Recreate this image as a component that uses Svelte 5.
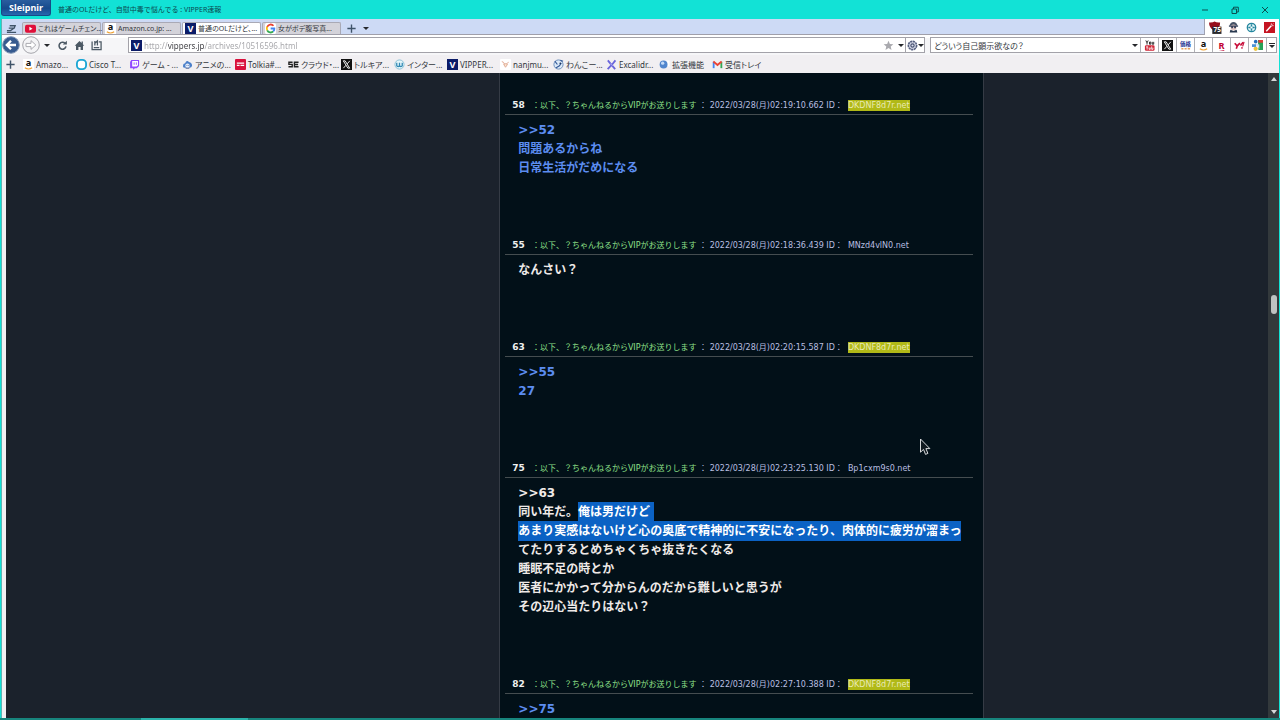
<script lang="ts">
	interface Post {
		num: number;
		date: string;
		id: string;
		owner: boolean;
		lines: string[];
	}

	const title = '普通のOLだけど、自慰中毒で悩んでる : VIPPER速報';

	const tabs = [
		{ icon: 'youtube', label: 'これはゲームチェン...' },
		{ icon: 'amazon', label: 'Amazon.co.jp: ...' },
		{ icon: 'vip', label: '普通のOLだけど、...' },
		{ icon: 'google', label: '女がボデ腹写真...' }
	];

	const bookmarks = [
		{ icon: 'amazon', label: 'Amazo...' },
		{ icon: 'cisco', label: 'Cisco T...' },
		{ icon: 'twitch', label: 'ゲーム - ...' },
		{ icon: 'anime', label: 'アニメの...' },
		{ icon: 'tolkia', label: 'Tolkia#...' },
		{ icon: 'sie', label: 'クラウド・...' },
		{ icon: 'x', label: 'トルキア...' },
		{ icon: 'internet', label: 'インター...' },
		{ icon: 'vip', label: 'VIPPER...' },
		{ icon: 'nanjmu', label: 'nanjmu...' },
		{ icon: 'wanko', label: 'わんこー...' },
		{ icon: 'excalidraw', label: 'Excalidr...' },
		{ icon: 'extension', label: '拡張機能' },
		{ icon: 'gmail', label: '受信トレイ' }
	];

	const engines = ['youtubeOld', 'x', 'kakaku', 'amazon', 'rakuten', 'yahoo', 'maps'];
	const extensions = ['ublock', 'agent', 'compass', 'wand'];

	const author = '以下、？ちゃんねるからVIPがお送りします';

	const posts: Post[] = [
		{ num: 58, date: '2022/03/28(月)02:19:10.662', id: 'DKDNF8d7r.net', owner: true, lines: ['>>52', '問題あるからね', '日常生活がだめになる'] },
		{ num: 55, date: '2022/03/28(月)02:18:36.439', id: 'MNzd4vlN0.net', owner: false, lines: ['なんさい？'] },
		{ num: 63, date: '2022/03/28(月)02:20:15.587', id: 'DKDNF8d7r.net', owner: true, lines: ['>>55', '27'] },
		{
			num: 75,
			date: '2022/03/28(月)02:23:25.130',
			id: 'Bp1cxm9s0.net',
			owner: false,
			lines: [
				'>>63',
				'同い年だ。[俺は男だけど]',
				'[あまり実感はないけど心の奥底で精神的に不安になったり、肉体的に疲労が溜まっ]てたりするとめちゃくちゃ抜きたくなる',
				'睡眠不足の時とか',
				'医者にかかって分からんのだから難しいと思うが',
				'その辺心当たりはない？'
			]
		},
		{ num: 82, date: '2022/03/28(月)02:27:10.388', id: 'DKDNF8d7r.net', owner: true, lines: ['>>75'] }
	];

	let activeTab = $state(2);
	let url = $state('http://vippers.jp/archives/10516596.html');
	let query = $state('どういう自己顕示欲なの？');

	// text between brackets is the selected part of a line
	function split(line: string) {
		return line
			.split(/(\[.*?\])/)
			.filter((s) => s)
			.map((s, i, all) => ({
				selected: s.startsWith('['),
				eol: i === all.length - 1,
				text: s.replace(/[[\]]/g, '')
			}));
	}
</script>

{#snippet icon(name: string)}
	<svg class="icon" viewBox="0 0 12 12" aria-hidden="true">
		{#if name === 'youtube'}
			<rect x="0" y="2" width="12" height="8.5" rx="2" fill="#e0103a" />
			<path d="M4.8 4.2v4l3.4-2z" fill="#fff" />
		{:else if name === 'amazon'}
			<rect width="12" height="12" fill="#fff" />
			<text x="3" y="8" font-size="10" font-weight="700" fill="#111">a</text>
			<path d="M2 9.6q4 2.7 8 0" fill="none" stroke="#f0a030" stroke-width="1.2" />
		{:else if name === 'vip'}
			<rect width="12" height="12" fill="#0c1c68" />
			<text x="2.7" y="9.5" font-size="10" font-weight="700" fill="#fff">V</text>
		{:else if name === 'google'}
			<rect width="12" height="12" rx="2" fill="#fff" />
			<g fill="none" stroke-width="2">
				<path d="M9.3 3A4.2 4.2 0 0 0 2.4 4.1" stroke="#ea4335" />
				<path d="M2.4 4.1a4.2 4.2 0 0 0 0 3.9" stroke="#fbbc05" />
				<path d="M2.4 8a4.2 4.2 0 0 0 6.6 1.2" stroke="#34a853" />
				<path d="M9 9.2A4 4 0 0 0 10.2 6H6.2" stroke="#4285f4" />
			</g>
		{:else if name === 'cisco'}
			<rect x="1" y="1" width="10" height="10" rx="4" fill="#fff" stroke="#1ba6d4" stroke-width="2" />
		{:else if name === 'twitch'}
			<path d="M2.5 1H11v6.5L8.5 10H6.5L4.5 11.8V10H1.2V3.2z" fill="#9147ff" />
			<path d="M3.5 2.2h6.3v4.6L8.2 8.3H3.5z" fill="#fff" />
			<path d="M5.6 3.7v2.6M8 3.7v2.6" stroke="#9147ff" />
		{:else if name === 'anime'}
			<path d="M1 7.8Q1 5 3.4 4.7 5 .4 7.6 3.2 10.9 3.8 11 7.4 10.4 9.8 8 9.6H3.2Q1.1 9.4 1 7.8" fill="#4b7fc9" />
			<circle cx="6" cy="7.4" r="2.4" fill="#e6f0ff" />
			<path d="M4 10h4M5 7h.8M7 7h.8" stroke="#344a80" />
		{:else if name === 'tolkia'}
			<rect width="12" height="12" rx="1" fill="#d9113c" />
			<path d="M2 4.5h8M2 7h3M6 7h4" stroke="#fff" stroke-width="1.5" />
		{:else if name === 'sie'}
			<path d="M5 3.5H1v2.3h3.6v2.7H.5M11.5 3.5H7v5h4.5M7 6h4" fill="none" stroke="#222" stroke-width="1.5" />
		{:else if name === 'x'}
			<rect width="12" height="12" fill="#111" />
			<path d="M2.5 2h2l5 8h-2zM9.6 2 6.8 5.3M5.3 6.9 2.6 10" fill="none" stroke="#fff" />
		{:else if name === 'internet'}
			<circle cx="6" cy="6" r="5" fill="#e5f6fa" stroke="#85bed4" />
			<path d="M3 4v3.5q1.5 1.4 3 0V4M6 7.5q1.5 1.4 3 0V4" fill="none" stroke="#348ab5" stroke-width="1.4" />
		{:else if name === 'nanjmu'}
			<rect width="12" height="12" rx="1" fill="#fff" />
			<path d="M2 2.8q2 0 3 3M9.5 3.5 7 5.2M4 5.8q2.5-1.6 4.2 0L6 9z" fill="#fbe5cf" stroke="#dfaa95" />
		{:else if name === 'wanko'}
			<circle cx="6" cy="6" r="5" fill="#dbe9f8" stroke="#668ab8" />
			<path d="M2 2.4 4.8 6M8 1.5l3 1M3 9.7l4-2.3 2-3" fill="none" stroke="#345a99" stroke-width="1.3" />
			<circle cx="8" cy="4.7" r="1" fill="#20345c" />
		{:else if name === 'excalidraw'}
			<path d="m2 1.5 3.3 4L10 11M10.3 1.5 6.7 6 1.8 11" fill="none" stroke="#6965db" stroke-width="2" />
			<path d="m4.3 5 3.4 2.3" stroke="#a9a4f0" />
		{:else if name === 'extension'}
			<path d="M6 1.5h5.5v7L8 7z" fill="#fff" />
			<circle cx="5" cy="6" r="4.3" fill="#5186cd" />
			<circle cx="4" cy="4.6" r="1.8" fill="#c3dbf7" />
		{:else if name === 'gmail'}
			<path d="M1.8 10V3" stroke="#4285f4" stroke-width="2" />
			<path d="M10.2 10V3" stroke="#34a853" stroke-width="2" />
			<path d="M1.5 2.8 6 6.5l4.5-3.7" fill="none" stroke="#ea4335" stroke-width="2" />
		{:else if name === 'youtubeOld'}
			<rect x="1" y="5.8" width="10.5" height="6" rx="1.4" fill="#cf2637" />
			<path d="M2 .5 3.3 3v2M4.6.5 3.3 3M6 2.2h1.4v2.4H6zM9 2v2.6h1.6V2" fill="none" stroke="#222" />
			<path d="M2.3 7.5h2.2M3.4 7.5v3M5.6 8.2v2h1.2v-2M8.4 7v3.2h1.3V8.4" fill="none" stroke="#fff" stroke-width=".9" />
		{:else if name === 'kakaku'}
			<text x="0" y="6.6" font-size="6" font-weight="700" fill="#1a2d92">価格</text>
			<path d="M1.5 9.5h2.2M5 9.5h2.2M8.4 9.5h2.6" stroke="#e6a060" stroke-width="1.8" />
		{:else if name === 'rakuten'}
			<text x="2.7" y="9.5" font-size="10" font-weight="700" fill="#bf0030">R</text>
			<path d="M3 10.8h6.5l-1 .8z" fill="#bf0030" />
		{:else if name === 'yahoo'}
			<path d="m.8 3.5 2.7 3 3-3M3.5 6.5 2.5 9.5M7 6l3-3.5M8 8.6h1.4" fill="none" stroke="#c80f3b" stroke-width="1.8" />
			<path d="m11 2-1.6 5" stroke="#c80f3b" stroke-width="1.3" />
		{:else if name === 'maps'}
			<path d="M6.5 0H12v11H7z" fill="#24a156" />
			<path d="M7 0h5v3H7z" fill="#df3b37" />
			<path d="m4.5 4 3.5 1v5z" fill="#cfe3f5" />
			<circle cx="4" cy="1.8" r="2" fill="#2471bd" />
			<path d="M0 4.6h4.5v3H0z" fill="#4d92d4" />
			<circle cx="4" cy="9.6" r="2.3" fill="#ecc33b" />
		{:else if name === 'ublock'}
			<path d="M-1 .5Q3 .8 5-.5 7 .8 11 .5 11.5 6.5 5 10-1.3 6.5-1 .5" fill="#970e1c" />
			<rect x="2.5" y="5" width="10" height="8" fill="#29292c" />
			<text x="3.8" y="11.4" font-size="7" font-weight="700" fill="#fff">75</text>
		{:else if name === 'agent'}
			<path d="M1.5 4.2Q2.5 0 6 0t4.5 4.2z" fill="#465366" />
			<circle cx="6" cy="6" r="3.2" fill="#e4c6c1" />
			<path d="M1 4.5h10M3.5 6h2M6.7 6h2" stroke="#34415a" stroke-width="1.4" />
			<path d="m1.8 11.5.8-3L6 9.8l3.4-1.3.8 3z" fill="#28384e" />
		{:else if name === 'compass'}
			<circle cx="6" cy="6" r="4.6" fill="#e5f7fa" stroke="#23859d" stroke-width="1.4" />
			<path d="M6 2.5v7M2.5 6h7" stroke="#23859d" stroke-width="1.6" />
			<circle cx="6" cy="6" r="1.2" fill="#fff" />
		{:else if name === 'wand'}
			<rect width="12" height="12" fill="#c51422" />
			<path d="m2.5 10 5.5-6" stroke="#fff" stroke-width="1.6" />
			<path d="M8 1.5v2M10.5 4h-2M9.2 2.7l1-1" stroke="#fff" stroke-width=".8" />
		{/if}
	</svg>
{/snippet}

<div class="window">
	<header class="titlebar">
		<button class="brand">Sleipnir</button>
		<span class="title">{title}</span>
		<div class="window-buttons">
			<button aria-label="Minimize"><svg viewBox="0 0 8 8"><path d="M1 4h6" /></svg></button>
			<button aria-label="Restore"><svg viewBox="0 0 8 8"><path d="M1 3h4.5v4.5H1zM2.5 3V1.2h4.8V6H5.5" /></svg></button>
			<button aria-label="Close"><svg viewBox="0 0 8 8"><path d="m1 1 6 6M7 1 1 7" /></svg></button>
		</div>
	</header>

	<div class="frame">
		<div class="tabrow">
			<div class="tabs">
				<button class="tool" aria-label="Tab list">
					<svg class="icon" viewBox="0 0 12 12"><path d="M4 3h6L9 5.5H3M1 8.3h4l4-2.8M1 10.3h10" fill="none" stroke="#3f5368" stroke-width="1.4" /></svg>
				</button>
				{#each tabs as tab, i}
					<button class="tab" class:active={i === activeTab} onclick={() => (activeTab = i)}>
						{@render icon(tab.icon)}
						<span>{tab.label}</span>
					</button>
				{/each}
				<button class="tool new-tab" aria-label="New tab">
					<svg class="icon" viewBox="0 0 12 12"><path d="M6 1.5v9M1.5 6h9" stroke="#3f5368" stroke-width="1.5" /></svg>
				</button>
				<button class="tool closed-tabs" aria-label="Closed tabs"><i class="arrow"></i></button>
			</div>
			<div class="extensions">
				{#each extensions as name}
					<button aria-label={name}>{@render icon(name)}</button>
				{/each}
			</div>
		</div>

		<div class="navrow">
			<div class="nav-buttons">
				<button class="round" aria-label="Back">
					<svg viewBox="0 0 18 18">
						<circle cx="9" cy="9" r="8.3" fill="#365a8f" stroke="#7f93b3" />
						<path d="M14 9H5M9 4.8 4.8 9 9 13.2" fill="none" stroke="#fff" stroke-width="2.3" />
					</svg>
				</button>
				<button class="round" aria-label="Forward">
					<svg viewBox="0 0 18 18">
						<circle cx="9" cy="9" r="8.3" fill="#f4f4f6" stroke="#a5a5ab" />
						<path d="M4 7.4h5V4.6L13.8 9 9 13.4v-2.8H4z" fill="#fff" stroke="#aaaab0" />
					</svg>
				</button>
				<button class="history" aria-label="History"><i class="arrow"></i></button>
				<button aria-label="Reload">
					<svg class="icon" viewBox="0 0 12 12"><path d="M8.8 3.6A3.8 3.8 0 1 0 9.8 7" fill="none" stroke="#4c5964" stroke-width="1.7" /><path d="M6.3 4.9h4.5V.8z" fill="#4c5964" /></svg>
				</button>
				<button aria-label="Home">
					<svg class="icon" viewBox="0 0 12 12"><path d="M6 1 .8 6.2h1.4V11h2.6V7.6h2.4V11h2.6V6.2h1.4L9.7 4.6V1.7H8.3v1.5z" fill="#4c5964" /></svg>
				</button>
				<button aria-label="Bookmark list">
					<svg class="icon" viewBox="0 0 12 12"><path d="M1.2 1.5v9h9.8V2H8.5M4.2 1v5M4.2 3.5 7 1v5M3 8.3h6" fill="none" stroke="#4c5964" stroke-width="1.4" /></svg>
				</button>
			</div>
			<div class="address">
				{@render icon('vip')}
				<input class="url" type="text" aria-label="Address" bind:value={url} />
				<button aria-label="Add bookmark">
					<svg class="icon" viewBox="0 0 12 12"><path d="m6 .8 1.5 3.5 3.8.3-2.9 2.5.9 3.7L6 8.8l-3.3 2 .9-3.7L.7 4.6l3.8-.3z" fill="#a9a9ae" /></svg>
				</button>
				<button class="address-history" aria-label="Address history"><i class="arrow"></i></button>
			</div>
			<button class="engine-switch" aria-label="Rendering engine">
				<svg class="icon" viewBox="0 0 12 12"><circle cx="6" cy="6" r="4.5" fill="#dfe2f0" stroke="#566080" stroke-width="1.8" stroke-dasharray="2.4 .6" /><circle cx="6" cy="6" r="1.8" fill="none" stroke="#465070" stroke-width="1.3" /></svg>
				<i class="arrow"></i>
			</button>
			<div class="search">
				<input type="text" aria-label="Search" bind:value={query} />
				<button aria-label="Search history"><i class="arrow"></i></button>
				{#each engines as name}
					<button class="engine" aria-label={name}>{@render icon(name)}</button>
				{/each}
				<button class="more" aria-label="More engines"><i class="bar"></i><i class="arrow"></i></button>
			</div>
		</div>

		<nav class="bookmarks">
			<button class="tool" aria-label="Add link">
				<svg class="icon" viewBox="0 0 12 12"><path d="M6 1.5v9M1.5 6h9" stroke="#3f5368" stroke-width="1.6" /></svg>
			</button>
			{#each bookmarks as bookmark}
				<a href="#{bookmark.icon}">{@render icon(bookmark.icon)}<span>{bookmark.label}</span></a>
			{/each}
		</nav>

		<div class="view">
			<main class="page">
				<div class="column">
					{#each posts as post}
						<article class:owner={post.owner}>
							<div class="meta">
								<b>{post.num}</b><span class="author">：{author}</span> ：
								{post.date} ID：&nbsp; <span class="id">{post.id}</span>
							</div>
							<div class="body">
								{#each post.lines as line}
									<p>{#each split(line) as part}{#if part.selected}<mark class:eol={part.eol}>{part.text}</mark>{:else}{part.text}{/if}{/each}</p>
								{/each}
							</div>
						</article>
					{/each}
				</div>
			</main>
			<div class="scrollbar">
				<i class="up"></i>
				<i class="thumb"></i>
				<i class="down"></i>
			</div>
		</div>
	</div>
	<div class="edge"></div>

	<svg class="cursor" viewBox="0 0 12 18" aria-hidden="true">
		<path d="M1.5 1v13.2l3-2.8 2 5 2.4-1-2-4.8h4z" fill="#111a20" stroke="#d8dadc" />
	</svg>
</div>

<style>
	:global(body) {
		margin: 0;
		overflow: hidden;
	}

	.window {
		position: relative;
		display: flex;
		flex-direction: column;
		height: 100vh;
		overflow: hidden;
		background: #12e2d6;
		font-family: "Noto Sans", "Noto Sans CJK JP", sans-serif;
		font-size: 8px;
		color: #33373d;
	}

	button {
		display: flex;
		align-items: center;
		justify-content: center;
		padding: 0;
		border: none;
		background: none;
		font: inherit;
		color: inherit;
	}

	input {
		min-width: 0;
		flex: 1;
		padding: 0;
		border: none;
		outline: none;
		background: none;
		font: inherit;
		color: inherit;
	}

	.icon {
		flex: none;
		display: block;
		width: 11px;
		height: 11px;
		overflow: visible;
		font-family: "Noto Sans", "Noto Sans CJK JP", sans-serif;
	}

	.arrow {
		border: 3px solid transparent;
		border-top-color: #26282c;
		border-bottom: none;
	}

	/* title bar */
	.titlebar {
		display: flex;
		align-items: center;
		height: 19px;
		padding-left: 1px;
	}

	.brand {
		align-self: flex-start;
		width: 50px;
		height: 16px;
		border: 1px solid #174a86;
		border-top: none;
		border-radius: 0 0 3px 3px;
		background: linear-gradient(#2a5e9f, #174a8c 55%, #2768b0);
		font-size: 9px;
		font-weight: 700;
		color: #fff;
	}

	.title {
		flex: 1;
		padding-left: 7px;
		font-size: 7px;
		line-height: 17px;
		color: #0c4a50;
	}

	.window-buttons {
		display: flex;
	}

	.window-buttons button {
		width: 30px;
		height: 18px;
	}

	.window-buttons svg {
		width: 8px;
		height: 8px;
		fill: none;
		stroke: #0b4f50;
	}

	/* tab row */
	.frame {
		flex: 1;
		min-height: 0;
		display: flex;
		flex-direction: column;
		margin: 0 1px;
		border-left: 1px solid #5fb5b3;
		background: #f1eff2;
	}

	.tabrow {
		display: flex;
		height: 16px;
		background: #fff;
	}

	.tabs {
		flex: 1;
		display: flex;
		align-items: flex-end;
		gap: 1px;
		border-right: 1px solid #9fa2b3;
		border-bottom: 1px solid #a09faa;
		background: #cddaf5;
	}

	.tabs .tool {
		width: 19px;
		height: 12px;
	}

	.tabs .closed-tabs {
		width: 8px;
	}

	.tab {
		box-sizing: border-box;
		justify-content: flex-start;
		gap: 2px;
		width: 79px;
		height: 12px;
		padding-left: 2px;
		border: 1px solid #a9a9b5;
		border-bottom: none;
		border-radius: 2px 2px 0 0;
		background: #d4d3da;
		white-space: nowrap;
		font-size: 7px;
		line-height: 10px;
		font-feature-settings: "palt";
	}

	.tab.active {
		background: #fff;
	}

	.extensions {
		display: flex;
		align-items: center;
		gap: 7px;
		padding: 0 4px 0 5px;
	}

	/* navigation row */
	.navrow {
		display: flex;
		align-items: center;
		height: 20px;
		background: linear-gradient(#fff 3px, #f6f6f8 3px);
	}

	.nav-buttons {
		display: flex;
		align-items: center;
		gap: 6px;
		width: 126px;
	}

	.nav-buttons .round {
		width: 18px;
		margin-right: -4px;
	}

	.round svg {
		width: 18px;
		height: 18px;
	}

	.nav-buttons .history {
		margin: 0 1px 0 2px;
	}

	.address,
	.search,
	.engine-switch {
		display: flex;
		align-items: center;
		box-sizing: border-box;
		height: 16px;
		border: 1px solid #a3a2a9;
		background: #fff;
	}

	.address {
		flex: 780;
		gap: 2px;
		padding: 0 1px 0 2px;
	}

	.address-history {
		padding-left: 2px;
	}

	/* the host part of the address is darker than the rest */
	.url {
		background: linear-gradient(90deg, #a3a3a7 24px, #3b3b40 24px 60px, #a3a3a7 60px);
		background-clip: text;
		-webkit-background-clip: text;
		color: transparent;
		caret-color: #333;
	}

	.engine-switch {
		width: 19px;
		border-left: none;
	}

	.search {
		flex: 345;
		margin: 0 2px 0 5px;
		padding-left: 3px;
		font-feature-settings: "palt";
	}

	.search button {
		align-self: stretch;
		width: 10px;
	}

	.search .engine {
		box-sizing: border-box;
		width: 18px;
		border-left: 1px solid #b0b0b5;
	}

	.search .more {
		flex-direction: column;
		gap: 1px;
		border-left: 1px solid #b0b0b5;
	}

	.bar {
		width: 6px;
		height: 1px;
		background: #26282c;
	}

	/* bookmarks bar */
	.bookmarks {
		display: flex;
		align-items: center;
		height: 18px;
		white-space: nowrap;
	}

	.bookmarks .tool {
		width: 16px;
		margin-right: 5px;
	}

	.bookmarks a {
		display: flex;
		align-items: center;
		gap: 2px;
		width: 53px;
		color: inherit;
		text-decoration: none;
		font-feature-settings: "palt";
	}

	/* page */
	.view {
		flex: 1;
		min-height: 0;
		display: flex;
		margin-left: 4px;
	}

	.page {
		flex: 1;
		min-width: 0;
		display: grid;
		grid-template-columns: 494fr 485px 284fr;
		overflow: hidden;
		background: #1b222c;
		font-family: "DejaVu Sans", "Noto Sans CJK JP", sans-serif;
	}

	.column {
		grid-column: 2;
		box-sizing: border-box;
		padding: 24px 10px 0 5px;
		border: 1px solid #353b45;
		border-width: 0 1px;
		background: #021018;
	}

	.meta {
		height: 17px;
		padding-left: 7px;
		border-bottom: 1px solid #454d50;
		line-height: 17px;
		white-space: nowrap;
		color: #b9bfe0;
	}

	.meta b {
		margin-right: 7px;
		font-size: 9px;
		color: #f0f0f0;
	}

	.author {
		color: #8fe08a;
	}

	.owner .id {
		padding: 1px 0;
		background: #b1b917;
		color: #e9eab4;
	}

	.body {
		padding: 6px 8px 59px 13px;
		font-size: 12px;
		font-weight: 700;
		line-height: 19px;
		color: #efeae8;
	}

	.owner .body {
		color: #5c8df0;
	}

	p {
		margin: 0;
	}

	mark {
		padding: 3px 0;
		background: #0b62c4;
		color: #fff;
	}

	.eol {
		padding-right: 4px;
	}

	.scrollbar {
		display: flex;
		flex-direction: column;
		align-items: center;
		width: 11px;
		padding: 4px 0;
		background: #33393c;
	}

	.up,
	.down {
		border: 3px solid transparent;
	}

	.up {
		border-top: none;
		border-bottom: 4px solid #d5d7d8;
	}

	.down {
		margin-top: auto;
		border-top: 4px solid #d5d7d8;
		border-bottom: none;
	}

	.thumb {
		width: 6px;
		height: 19px;
		margin-top: 214px;
		border-radius: 3px;
		background: #bfc1c1;
	}

	.edge {
		height: 2px;
		background: linear-gradient(90deg, #17857d 11%, #2bb3ab 11% 19.4%, #17857d 19.4%);
	}

	.cursor {
		position: absolute;
		left: 919px;
		top: 438px;
		width: 12px;
		height: 18px;
	}
</style>
